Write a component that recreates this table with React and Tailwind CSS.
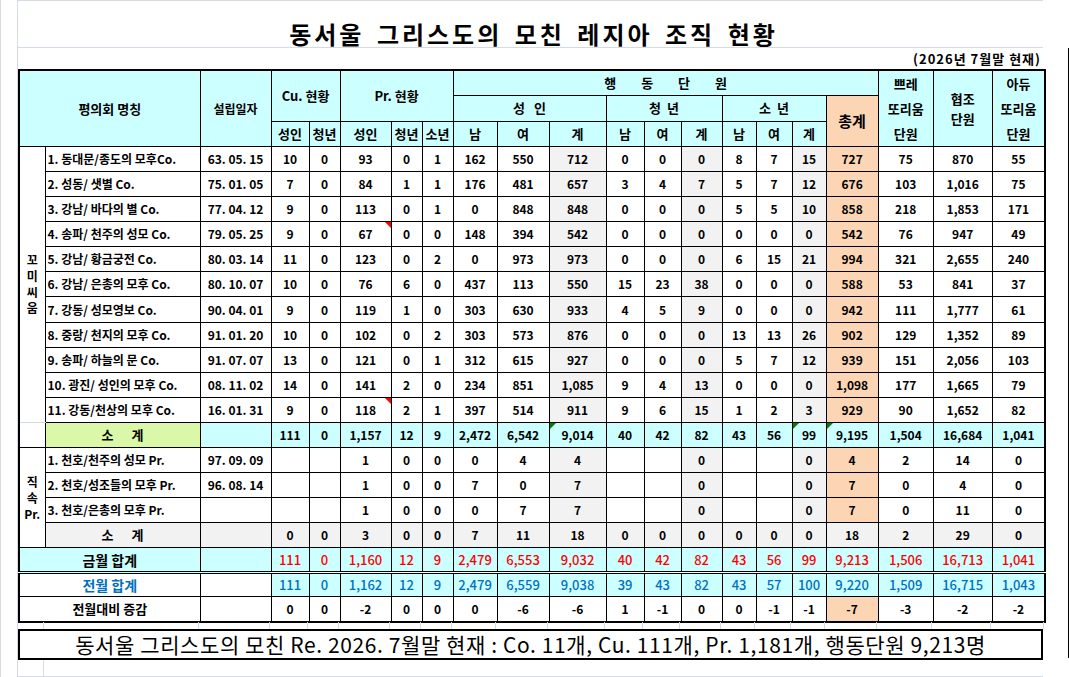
import React from "react";

const COLW = [
  "w-[26px]", "w-[155px]", "w-[71px]", "w-[38px]", "w-[31px]", "w-[51px]", "w-[31px]",
  "w-[31px]", "w-[44px]", "w-[52px]", "w-[57px]", "w-[38px]", "w-[37px]", "w-[41px]",
  "w-[34px]", "w-[36px]", "w-[34px]", "w-[52px]", "w-[55px]", "w-[59px]", "w-[53px]",
];

const CY = "bg-[#ccffff]";
const PE = "bg-[#fcd5b4]";
const GR = "bg-[#f2f2f2]";
const YG = "bg-[#daf8a8]";
const cell = "border border-black p-0 text-center align-middle";

const coRows = [
  ["1. 동대문/종도의 모후Co.", "63. 05. 15", ["10", "0", "93", "0", "1", "162", "550", "712", "0", "0", "0", "8", "7", "15", "727", "75", "870", "55"]],
  ["2. 성동/ 샛별 Co.", "75. 01. 05", ["7", "0", "84", "1", "1", "176", "481", "657", "3", "4", "7", "5", "7", "12", "676", "103", "1,016", "75"]],
  ["3. 강남/ 바다의 별 Co.", "77. 04. 12", ["9", "0", "113", "0", "1", "0", "848", "848", "0", "0", "0", "5", "5", "10", "858", "218", "1,853", "171"]],
  ["4. 송파/ 천주의 성모 Co.", "79. 05. 25", ["9", "0", "67", "0", "0", "148", "394", "542", "0", "0", "0", "0", "0", "0", "542", "76", "947", "49"], "red"],
  ["5. 강남/ 황금궁전 Co.", "80. 03. 14", ["11", "0", "123", "0", "2", "0", "973", "973", "0", "0", "0", "6", "15", "21", "994", "321", "2,655", "240"]],
  ["6. 강남/ 은총의 모후 Co.", "80. 10. 07", ["10", "0", "76", "6", "0", "437", "113", "550", "15", "23", "38", "0", "0", "0", "588", "53", "841", "37"]],
  ["7. 강동/ 성모영보 Co.", "90. 04. 01", ["9", "0", "119", "1", "0", "303", "630", "933", "4", "5", "9", "0", "0", "0", "942", "111", "1,777", "61"]],
  ["8. 중랑/ 천지의 모후 Co.", "91. 01. 20", ["10", "0", "102", "0", "2", "303", "573", "876", "0", "0", "0", "13", "13", "26", "902", "129", "1,352", "89"]],
  ["9. 송파/ 하늘의 문 Co.", "91. 07. 07", ["13", "0", "121", "0", "1", "312", "615", "927", "0", "0", "0", "5", "7", "12", "939", "151", "2,056", "103"]],
  ["10. 광진/ 성인의 모후 Co.", "08. 11. 02", ["14", "0", "141", "2", "0", "234", "851", "1,085", "9", "4", "13", "0", "0", "0", "1,098", "177", "1,665", "79"]],
  ["11. 강동/천상의 모후 Co.", "16. 01. 31", ["9", "0", "118", "2", "1", "397", "514", "911", "9", "6", "15", "1", "2", "3", "929", "90", "1,652", "82"], "red"],
];

const sub1 = ["111", "0", "1,157", "12", "9", "2,472", "6,542", "9,014", "40", "42", "82", "43", "56", "99", "9,195", "1,504", "16,684", "1,041"];

const prRows = [
  ["1. 천호/천주의 성모 Pr.", "97. 09. 09", ["", "", "1", "0", "0", "0", "4", "4", "", "", "0", "", "", "0", "4", "2", "14", "0"]],
  ["2. 천호/성조들의 모후 Pr.", "96. 08. 14", ["", "", "1", "0", "0", "7", "0", "7", "", "", "0", "", "", "0", "7", "0", "4", "0"]],
  ["3. 천호/은총의 모후 Pr.", "", ["", "", "1", "0", "0", "0", "7", "7", "", "", "0", "", "", "0", "7", "0", "11", "0"]],
];

const sub2 = ["0", "0", "3", "0", "0", "7", "11", "18", "0", "0", "0", "0", "0", "0", "18", "2", "29", "0"];
const cur = ["111", "0", "1,160", "12", "9", "2,479", "6,553", "9,032", "40", "42", "82", "43", "56", "99", "9,213", "1,506", "16,713", "1,041"];
const prev = ["111", "0", "1,162", "12", "9", "2,479", "6,559", "9,038", "39", "43", "82", "43", "57", "100", "9,220", "1,509", "16,715", "1,043"];
const diff = ["0", "0", "-2", "0", "0", "0", "-6", "-6", "1", "-1", "0", "0", "-1", "-1", "-7", "-3", "-2", "-2"];

const RedTri = () => (
  <span className="absolute top-0 right-0 w-0 h-0 border-l-[6px] border-l-transparent border-t-[6px] border-t-[#ff0000]" />
);
const GreenTri = () => (
  <span className="absolute top-0 left-0 w-0 h-0 border-r-[6px] border-r-transparent border-t-[6px] border-t-[#008000]" />
);

function bgFor(type, i) {
  if (type === "sub1" || type === "cur" || type === "prev") return CY;
  if (type === "sub2") return GR;
  if (i === 14) return PE;
  if (type === "diff") return "bg-white";
  if (i === 7 || i === 10 || i === 13) return GR;
  return "bg-white";
}

function Nums({ vals, type, tri }) {
  return vals.map((v, i) => (
    <td key={i} className={`${cell} ${bgFor(type, i)} relative`}>
      {v}
      {tri === "red" && i === 2 ? <RedTri /> : null}
      {tri === "green" && (i === 7 || i === 13 || i === 14) ? <GreenTri /> : null}
    </td>
  ));
}

function SoGye({ bg }) {
  return (
    <td className={`${cell} ${bg} text-[13px]`}>
      <span className="flex justify-center gap-[18px]">
        <span>소</span>
        <span>계</span>
      </span>
    </td>
  );
}

function GridStrip({ h, all }) {
  return (
    <div className={`flex ${h}`}>
      {COLW.map((w, i) => (
        <div
          key={i}
          className={`${w} shrink-0 ${all || i < 1 ? "border-r border-[#d5dbe5]" : ""}`}
        />
      ))}
    </div>
  );
}

export default function App() {
  return (
    <div className="w-[1069px] h-[677px] bg-white overflow-hidden flex border-l border-[#d5dbe5] font-['Noto_Sans_CJK_KR',sans-serif] text-black">
      <div className="w-[16px] shrink-0" />
      <div className="w-[1026px] shrink-0 flex flex-col border-l border-t border-[#d5dbe5]">
        <div className="h-[47px] border-b border-[#d5dbe5] flex items-end justify-center">
          <h1 className="text-[24px] leading-[26px] font-bold tracking-[3px] [word-spacing:4px] pl-[6px]">동서울 그리스도의 모친 레지아 조직 현황</h1>
        </div>
        <div className="h-[21px] flex items-center justify-end pr-[2px]">
          <span className="text-[13px] font-bold tracking-[1px] leading-none">(2026년 7월말 현재)</span>
        </div>
        <table className="w-[1026px] table-fixed border-collapse border-2 border-black text-[12px] font-bold leading-[14px]">
          <colgroup>
            {COLW.map((w, i) => (
              <col key={i} className={w} />
            ))}
          </colgroup>
          <thead className="text-[13px]">
            <tr className="h-[25px]">
              <th colSpan={2} rowSpan={3} className={`${cell} ${CY} font-bold`}>평의회 명칭</th>
              <th rowSpan={3} className={`${cell} ${CY} font-bold text-[12px]`}>설립일자</th>
              <th colSpan={2} rowSpan={2} className={`${cell} ${CY} font-bold`}>Cu. 현황</th>
              <th colSpan={3} rowSpan={2} className={`${cell} ${CY} font-bold`}>Pr. 현황</th>
              <th colSpan={10} className={`${cell} ${CY} font-bold`}>
                <span className="flex justify-center gap-[25px]">
                  <span>행</span>
                  <span>동</span>
                  <span>단</span>
                  <span>원</span>
                </span>
              </th>
              <th rowSpan={3} className={`${cell} ${CY} font-bold leading-[25px]`}>
                쁘레<br />또리움<br />단원
              </th>
              <th rowSpan={3} className={`${cell} ${CY} font-bold leading-[20px]`}>
                협조<br />단원
              </th>
              <th rowSpan={3} className={`${cell} ${CY} font-bold leading-[25px]`}>
                아듀<br />또리움<br />단원
              </th>
            </tr>
            <tr className="h-[25px]">
              <th colSpan={3} className={`${cell} ${CY} font-bold`}>
                <span className="flex justify-center gap-[9px]"><span>성</span><span>인</span></span>
              </th>
              <th colSpan={3} className={`${cell} ${CY} font-bold`}>
                <span className="flex justify-center gap-[6px]"><span>청</span><span>년</span></span>
              </th>
              <th colSpan={3} className={`${cell} ${CY} font-bold`}>
                <span className="flex justify-center gap-[6px]"><span>소</span><span>년</span></span>
              </th>
              <th rowSpan={2} className={`${cell} ${PE} font-bold text-[15px]`}>총계</th>
            </tr>
            <tr className="h-[25px]">
              {["성인", "청년", "성인", "청년", "소년", "남", "여", "계", "남", "여", "계", "남", "여", "계"].map((t, i) => (
                <th key={i} className={`${cell} ${CY} font-bold`}>{t}</th>
              ))}
            </tr>
          </thead>
          <tbody>
            {coRows.map(([name, date, vals, tri], r) => (
              <tr key={r} className="h-[25px]">
                {r === 0 ? (
                  <td rowSpan={11} className={`${cell} bg-white border-b-[#d5dbe5]`}>
                    <span className="flex flex-col items-center leading-[16px]">
                      <span>꼬</span>
                      <span>미</span>
                      <span>씨</span>
                      <span>움</span>
                    </span>
                  </td>
                ) : null}
                <td className={`${cell} bg-white text-left pl-[2px] whitespace-nowrap`}>{name}</td>
                <td className={`${cell} bg-white`}>{date}</td>
                <Nums vals={vals} type="co" tri={tri} />
              </tr>
            ))}
            <tr className="h-[25px]">
              <td className={`${cell} bg-white border-t-[#d5dbe5]`} />
              <SoGye bg={YG} />
              <td className={`${cell} ${CY}`} />
              <Nums vals={sub1} type="sub1" tri="green" />
            </tr>
            {prRows.map(([name, date, vals], r) => (
              <tr key={r} className="h-[25px]">
                {r === 0 ? (
                  <td rowSpan={4} className={`${cell} bg-white`}>
                    <span className="flex flex-col items-center leading-[16px]">
                      <span>직</span>
                      <span>속</span>
                      <span>Pr.</span>
                    </span>
                  </td>
                ) : null}
                <td className={`${cell} bg-white text-left pl-[2px] whitespace-nowrap`}>{name}</td>
                <td className={`${cell} bg-white`}>{date}</td>
                <Nums vals={vals} type="pr" />
              </tr>
            ))}
            <tr className="h-[25px]">
              <SoGye bg={GR} />
              <td className={`${cell} ${GR}`} />
              <Nums vals={sub2} type="sub2" />
            </tr>
            <tr className="h-[25px] text-[#ff0000] font-medium text-[13px] [&>td]:border-b-[3px] [&>td]:[border-bottom-style:double]">
              <td colSpan={2} className={`${cell} ${CY} text-black font-bold text-[14px]`}>금월 합계</td>
              <td className={`${cell} ${CY}`} />
              <Nums vals={cur} type="cur" />
            </tr>
            <tr className="h-[24px] text-[#0070c0] font-medium text-[13px]">
              <td colSpan={2} className={`${cell} bg-white font-bold text-[14px]`}>전월 합계</td>
              <td className={`${cell} bg-white`} />
              <Nums vals={prev} type="prev" />
            </tr>
            <tr className="h-[25px]">
              <td colSpan={2} className={`${cell} bg-white text-[13px]`}>전월대비 증감</td>
              <td className={`${cell} bg-white`} />
              <Nums vals={diff} type="diff" />
            </tr>
          </tbody>
        </table>
        <GridStrip h="h-[7px]" all />
        <div className="h-[31px] border-2 border-black flex items-center justify-center">
          <span className="text-[21px] leading-none tracking-[0.6px]">
            동서울 그리스도의 모친 Re. 2026. 7월말 현재 : Co. 11개, Cu. 111개, Pr. 1,181개, 행동단원 9,213명
          </span>
        </div>
        <div className="flex-1 border-b border-[#d5dbe5]">
          <GridStrip h="h-full" />
        </div>
      </div>
      <div className="flex-1" />
      <div className="w-px shrink-0 flex flex-col">
        <div className="h-[48px]" />
        <div className="h-[610px] bg-black" />
      </div>
    </div>
  );
}
